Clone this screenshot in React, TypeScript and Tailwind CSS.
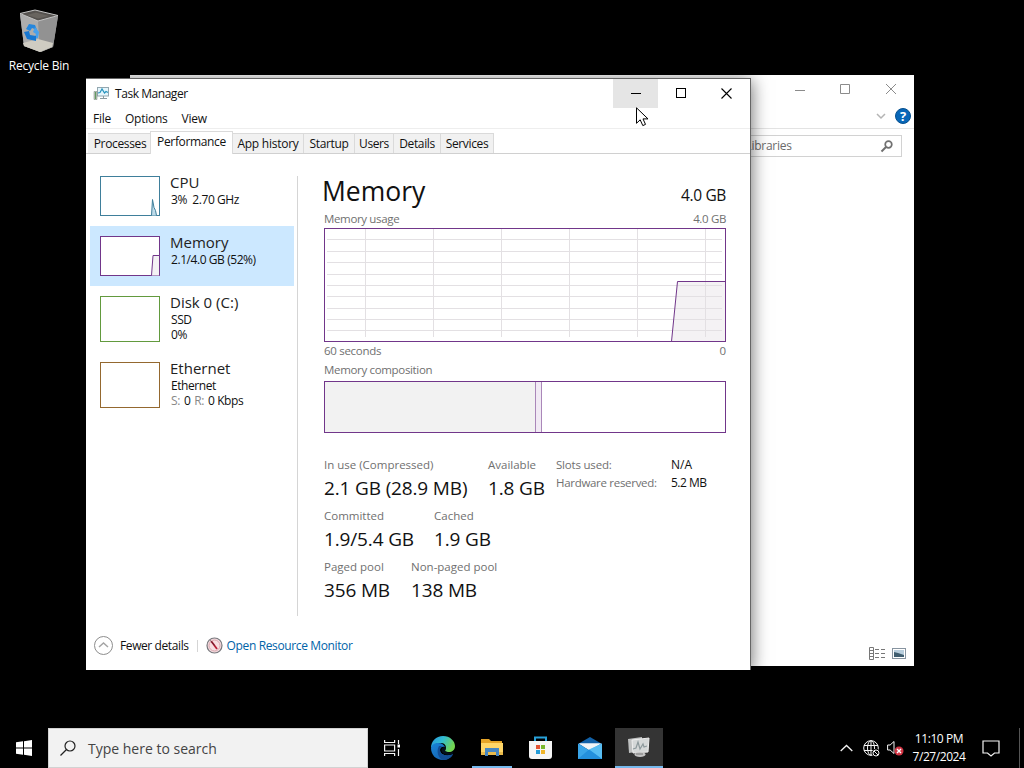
import React from 'react';
import clsx from 'clsx';

const tabs = [
    { label: 'Processes', style: 'w-[64px] pl-px tracking-[-0.35px]' },
    { label: 'Performance', style: 'w-[83px] tracking-[-0.35px]', active: true },
    { label: 'App history', style: 'w-[71px] tracking-[-0.25px]' },
    { label: 'Startup', style: 'w-[51px] tracking-[-0.35px]' },
    { label: 'Users', style: 'w-[39px] tracking-[-0.4px]' },
    { label: 'Details', style: 'w-[47px] tracking-[-0.35px]' },
    { label: 'Services', style: 'w-[53px] tracking-[-0.35px]' },
];

const statRows = [
    [
        { label: 'In use (Compressed)', value: '2.1 GB (28.9 MB)', width: 'w-[164px]' },
        { label: 'Available', value: '1.8 GB', width: 'w-[68px]' },
    ],
    [
        { label: 'Committed', value: '1.9/5.4 GB', width: 'w-[110px]' },
        { label: 'Cached', value: '1.9 GB', width: 'w-[100px]' },
    ],
    [
        { label: 'Paged pool', value: '356 MB', width: 'w-[87px]' },
        { label: 'Non-paged pool', value: '138 MB', width: 'w-[120px]' },
    ],
];

const RecycleBin: React.FC = () => (
    <div className="absolute left-0 top-[8px] w-[78px] flex flex-col items-center">
        <svg width="42" height="46" viewBox="0 0 42 46">
            <path d="M2 6 L20 12 L40 8 L35 39 L23 44 L6 38 Z" fill="#a2a2a2" />
            <path d="M2 6 L20 12 L22 44 L6 38 Z" fill="#adadad" />
            <path d="M20 12 L40 8 L35 39 L22 44 Z" fill="#929292" />
            <path d="M5 35 L20 31 L35 35 L34 39 L22 44 L6 38 Z" fill="#cfccc2" />
            <path d="M2 5.500 L17 2 L40 7.500 L20 13 Z" fill="#55524f" stroke="#c4c4c4" />
            <path d="M9 7 L18 4.500 L31 8 L20 10.500 Z" fill="#68645f" />
            <path d="M8 21 L11 16 L17 17 L19 22 L14 20 L12 23 Z" fill="#2586dc" />
            <path d="M17 19 L21 24 L20 30 L16 31 L18 26 L15 24 Z" fill="#47a1ed" />
            <path d="M6 24 L11 23 L12 27 L18 28 L18 33 L9 31 Z" fill="#1677d2" />
        </svg>
        <span className="mt-[4px] text-[12px] leading-4 text-white tracking-[-0.2px] whitespace-nowrap">Recycle Bin</span>
    </div>
);

const ExplorerWindow: React.FC = () => (
    <div className="absolute left-[130px] top-[75px] w-[784px] h-[591px] bg-white flex flex-col">
        <div className="h-[30px] flex justify-end shrink-0">
            {['M7 15.500h10', 'M6.500 9.500h9v9h-9z', 'M6 9l10 10M16 9L6 19'].map((d, i) => (
                <svg key={i} width="46" height="30" viewBox="-12 0 46 30" fill="none" stroke="#8b8b8b">
                    <path d={d} />
                </svg>
            ))}
        </div>
        <div className="h-[24px] flex items-start justify-end gap-[9px] pr-[3px] border-b border-[#e3e3e3]">
            <svg className="mt-[7px]" width="10" height="10" viewBox="0 0 10 10" fill="none" stroke="#b4b4b4" strokeWidth="1.500">
                <path d="M1 2l4 4 4-4" />
            </svg>
            <div className="mt-[3px] size-4 rounded-full bg-[#0867b8] border border-[#07508f] text-white text-[13px] font-bold flex items-center justify-center leading-none">?</div>
        </div>
        <div className="flex justify-end pt-[6px] pr-[12px]">
            <div className="w-[190px] h-[22px] border border-[#d2d2d2] flex items-center justify-between pl-[5px] pr-[7px]">
                <span className="text-[12px] text-[#6b6b6b] tracking-[-0.25px] whitespace-nowrap ml-[-12px]">Search Libraries</span>
                <svg width="14" height="14" viewBox="0 0 14 14" fill="none" stroke="#707070" strokeWidth="1.700">
                    <circle cx="8.500" cy="5.500" r="3.300" />
                    <path d="M6 8L1.500 12.500" strokeWidth="2" />
                </svg>
            </div>
        </div>
        <div className="mt-auto flex justify-end gap-[6px] pr-[8px] pb-[6px]">
            <svg width="17" height="13" viewBox="0 0 17 13" fill="none" stroke="#777">
                <path d="M.5 .5h4v12h-4zM.5 3.500h4M.5 6.500h4M.5 9.500h4" />
                <path d="M6 2.500h11M6 6.500h11M6 10.500h11" strokeDasharray="4 2" />
            </svg>
            <svg width="14" height="13" viewBox="0 0 14 13">
                <rect x=".5" y="1.500" width="13" height="10" fill="#fff" stroke="#8794a0" />
                <rect x="2" y="3" width="10" height="7" fill="#b8cedd" />
                <path d="M2 5l4 1 6 2v2H2z" fill="#405e70" />
            </svg>
        </div>
    </div>
);

const TitleBar: React.FC = () => (
    <div className="h-[29px] flex shrink-0">
        <div className="flex flex-1 items-center pl-[7px]">
            <svg width="17" height="15" viewBox="0 0 17 15">
                <rect x="4.500" y="1.500" width="11" height="8.500" fill="#e4f5fc" stroke="#93a7b0" />
                <path d="M5 7l2-.5L9 3l2.500 4L13 5.500l2 1" fill="none" stroke="#2793bd" strokeWidth="1.200" />
                <path d="M7 12.500h7M10.500 10v2" stroke="#8a999f" />
                <path d="M1 5.500h3v8H1z" fill="#bac6b9" stroke="#87928c" strokeWidth=".6" />
                <path d="M2.500 6v7" stroke="#639b62" />
            </svg>
            <span className="ml-[5px] mt-px text-[12px] tracking-[-0.45px]">Task Manager</span>
        </div>
        <div className="w-[45px] bg-[#e5e5e5] flex items-center justify-center">
            <div className="w-[10px] h-px bg-black" />
        </div>
        <div className="w-[46px] flex items-center justify-center">
            <div className="size-[10px] border border-black -mt-px" />
        </div>
        <div className="w-[46px] flex items-center justify-center">
            <svg className="-mt-px -ml-px" width="11" height="11" viewBox="0 0 11 11" stroke="#000" strokeWidth="1.100">
                <path d="M.5 .5l10 10M10.500 .5l-10 10" />
            </svg>
        </div>
    </div>
);

const ItemText: React.FC<{ name: string; children: React.ReactNode }> = ({ name, children }) => (
    <div className="ml-[10px] -mt-[3px] whitespace-nowrap">
        <div className="text-[15px] leading-[19px] text-[#222]">{name}</div>
        <div className="text-[12px] leading-[15px] tracking-[-0.43px] ml-px">{children}</div>
    </div>
);

const Sidebar: React.FC = () => (
    <div className="w-[204px] shrink-0 mt-[12px]">
        <div className="h-[60px] flex px-[10px] pt-[10px]">
            <svg width="60" height="40" viewBox="0 0 60 40" fill="#fff" stroke="#3f7f9b">
                <rect x=".5" y=".5" width="59" height="39" />
                <path d="M51.500 39.500l1-16 1.500 8 1.500 3 1 5" fill="#bfdcea" />
            </svg>
            <ItemText name="CPU">3%&nbsp; 2.70 GHz</ItemText>
        </div>
        <div className="h-[60px] flex px-[10px] pt-[10px] bg-[#cce8ff]">
            <svg width="60" height="40" viewBox="0 0 60 40" fill="#fff" stroke="#71368a">
                <rect x=".5" y=".5" width="59" height="39" />
                <path d="M51.500 39.500l1.500-20h6.500v20" fill="#f4f2f4" />
            </svg>
            <ItemText name="Memory">2.1/4.0 GB (52%)</ItemText>
        </div>
        <div className="h-[66px] flex px-[10px] pt-[10px]">
            <div className="w-[60px] h-[46px] border border-[#629a3e]" />
            <ItemText name="Disk 0 (C:)">SSD<br />0%</ItemText>
        </div>
        <div className="h-[66px] flex px-[10px] pt-[10px]">
            <div className="w-[60px] h-[46px] border border-[#94682f]" />
            <ItemText name="Ethernet">
                Ethernet<br />
                <span className="flex gap-[4px]">
                    <span className="text-[#888]">S:</span>
                    <span>0</span>
                    <span className="text-[#888]">R:</span>
                    <span>0 Kbps</span>
                </span>
            </ItemText>
        </div>
    </div>
);

const MemoryChart: React.FC = () => (
    <svg className="block" width="402" height="114" viewBox="0 0 402 114" fill="none">
        <path d="M347.500 113.500l6-60h48v60z" fill="#f4f2f4" />
        {[41.5, 109.5, 177.5, 245.5, 313.5, 381.5].map((x) => (
            <path key={x} d={`M${x} 1V109`} stroke="#e3e0e3" />
        ))}
        {[11.5, 23.5, 34.5, 46.5, 57.5, 68.5, 80.5, 91.5, 102.5].map((y) => (
            <path key={y} d={`M3 ${y}H398`} stroke="#e3e0e3" />
        ))}
        <path d="M347.500 113.500l6-60h48" stroke="#71368a" />
        <rect x=".5" y=".5" width="401" height="113" stroke="#71368a" />
    </svg>
);

const MemoryPanel: React.FC = () => (
    <div className="ml-[26px] w-[402px] text-[#707070] text-[11.5px]">
        <div className="flex justify-between items-end h-[55px] text-[#111] whitespace-nowrap">
            <h1 className="text-[26.5px] leading-[36px] ml-[-2px]">Memory</h1>
            <span className="text-[15.500px] leading-[20px] tracking-[-0.35px] mb-[4px]">4.0 GB</span>
        </div>
        <div className="flex justify-between h-[19px] items-center">
            <span className="tracking-[-0.35px]">Memory usage</span>
            <span className="tracking-[-0.35px]">4.0 GB</span>
        </div>
        <MemoryChart />
        <div className="flex justify-between h-[19px] items-center pb-[2px]">
            <span className="tracking-[-0.3px]">60 seconds</span>
            <span>0</span>
        </div>
        <div className="h-[20px] leading-[18px] tracking-[-0.33px]">Memory composition</div>
        <div className="flex h-[52px] border border-[#71368a]">
            <div className="w-[211px] bg-[#f2f2f2] border-r border-[#aa87b9]" />
            <div className="w-[6px] bg-[#f1eaf4] border-r border-[#aa87b9]" />
        </div>
        <div className="flex mt-[23px]">
            <div className="w-[232px] shrink-0">
                {statRows.map((row) => (
                    <div key={row[0].label} className="flex h-[51px]">
                        {row.map((stat) => (
                            <div key={stat.label} className={clsx('shrink-0 whitespace-nowrap', stat.width)}>
                                <div className="leading-[18px]">{stat.label}</div>
                                <div className="text-[19px] leading-[28px] text-[#111] tracking-[-0.15px]">{stat.value}</div>
                            </div>
                        ))}
                    </div>
                ))}
            </div>
            <div className="grid grid-cols-[115px_60px] auto-rows-[18px] leading-[18px] whitespace-nowrap h-[36px]">
                <span className="tracking-[-0.2px]">Slots used:</span>
                <span className="text-[12px] text-[#111]">N/A</span>
                <span className="tracking-[-0.3px]">Hardware reserved:</span>
                <span className="text-[12px] text-[#111] tracking-[-0.5px]">5.2 MB</span>
            </div>
        </div>
    </div>
);

const TaskManager: React.FC = () => (
    <div className="absolute left-[86px] top-[78px] w-[665px] h-[592px] bg-white border-t border-r border-[#666] shadow-[1px_2px_16px_rgba(0,0,0,0.55)] flex flex-col text-[#111]">
        <TitleBar />
        <div className="flex h-[21px] items-center shrink-0 pl-[7px] pt-[2px] gap-[14px] text-[12px] tracking-[-0.25px] border-b border-[#eee]">
            <span>File</span>
            <span>Options</span>
            <span>View</span>
        </div>
        <div className="h-[25px] shrink-0 flex items-end pl-[2px] border-b border-[#d0d0d0] text-[12px] whitespace-nowrap">
            {tabs.map((tab) => (
                <div
                    key={tab.label}
                    className={clsx(
                        'flex items-center justify-center border-[#dadada] shrink-0',
                        tab.active ? 'h-[23px] bg-white -mb-px -ml-[2px] pb-[2px] border-x border-t' : 'h-[20px] bg-[#f1f1f1] border-r border-t pt-px',
                        tab.style,
                    )}
                >
                    {tab.label}
                </div>
            ))}
        </div>
        <div className="flex h-[463px] pl-[4px]">
            <Sidebar />
            <div className="ml-[3px] mt-[22px] w-px h-[440px] bg-[#d5d5d5]" />
            <MemoryPanel />
        </div>
        <div className="flex flex-1 items-center pl-[8px] pt-[4px] text-[12px]">
            <svg width="19" height="19" viewBox="0 0 19 19" fill="none" stroke="#8d8d8d">
                <circle cx="9.500" cy="9.500" r="9" />
                <path d="M5 11l4.500-4 4.500 4" stroke="#a5a5a5" strokeWidth="1.500" />
            </svg>
            <span className="ml-[7px] tracking-[-0.4px]">Fewer details</span>
            <div className="ml-[8px] w-px h-[12px] bg-[#d5d5d5]" />
            <svg className="ml-[8px] -mt-px" width="17" height="17" viewBox="0 0 17 17" fill="none">
                <circle cx="8.500" cy="8.500" r="7.500" fill="#f6dfe2" stroke="#77777c" strokeWidth="1.200" />
                <circle cx="8.500" cy="8.500" r="5.500" stroke="#d9a5ad" />
                <path d="M5.500 4.500l5.500 7.500" stroke="#b71d35" strokeWidth="1.800" />
                <path d="M4.500 3.500l4 5" stroke="#5d2230" />
            </svg>
            <span className="ml-[4px] text-[#0063a8] tracking-[-0.37px]">Open Resource Monitor</span>
        </div>
    </div>
);

const Taskbar: React.FC = () => (
    <div className="absolute left-0 bottom-0 w-full h-[40px] bg-black flex text-white">
        <div className="w-[48px] flex items-center justify-center">
            <svg width="16" height="16" viewBox="0 0 16 16" fill="#fff">
                <path d="M0 2.300L7 1.300V7.500H0zM8 1.200L16 0V7.500H8zM0 8.500H7V14.700L0 13.700zM8 8.500H16V16L8 14.800z" />
            </svg>
        </div>
        <div className="w-[320px] bg-[#f2f2f2] border border-[#d2d2d2] flex items-center pl-[11px] text-[#444]">
            <svg width="16" height="16" viewBox="0 0 16 16" fill="none" stroke="#222" strokeWidth="1.200">
                <circle cx="10" cy="6" r="5" />
                <path d="M6.500 9.500L.5 15.500" />
            </svg>
            <span className="ml-[12px] text-[14px]">Type here to search</span>
        </div>
        <div className="w-[48px] flex items-center justify-center">
            <svg width="16" height="16" viewBox="0 0 16 16" fill="none" stroke="#f5f5f5" strokeWidth="1.200">
                <path d="M.6 0v2.500h10V0M.6 16v-2.500h10V16M.6 5h10v6H.6zM14.500 0v4M14.500 9v7" />
                <rect x="13.500" y="4.500" width="2.500" height="3" fill="#fff" stroke="none" />
            </svg>
        </div>
        <div className="w-[54px] flex items-center justify-center">
            <svg width="24" height="24" viewBox="0 0 24 24">
                <defs>
                    <linearGradient id="edgeTop" x1="0" y1="0" x2="1" y2=".4">
                        <stop offset="0" stopColor="#2793dc" />
                        <stop offset=".5" stopColor="#31bdd2" />
                        <stop offset="1" stopColor="#73d551" />
                    </linearGradient>
                    <linearGradient id="edgeBottom" x1="0" y1="0" x2="1" y2="1">
                        <stop offset="0" stopColor="#1985d8" />
                        <stop offset="1" stopColor="#1558a5" />
                    </linearGradient>
                </defs>
                <path d="M0 12C0 5 5 0 12 0c7 0 12 5 12 10 0 4-3 6-6 6-3 0-5-1-4-2 2-2 1-7-4-7-5 0-8 2-10 5z" fill="url(#edgeTop)" />
                <path d="M0 12c1-4 4-5 7-5 4 0 6 2 7 4-3-1-5 1-5 3 0 5 7 7 13 4-2 4-6 6-10 6C5 24 0 19 0 12z" fill="url(#edgeBottom)" />
                <path d="M8 10c-3 5-1 12 4 14 4 0 8-2 10-6-6 3-13 1-13-4 0-2 1-3 2-4z" fill="#124d94" />
                <path d="M14.500 11c1.500 3-2 3.500 1 5 2 1 5 1 7-.5l-1 2.500c-5 2-11 0-11-4 0-2 2-3.500 4-3z" fill="#04101c" />
            </svg>
        </div>
        <div className="ml-[2px] w-[40px] flex items-center justify-center border-b-2 border-[#76b9ed]">
            <svg className="mt-px" width="22" height="19" viewBox="0 0 22 19">
                <path d="M0 1h8l2 2h11v14H0z" fill="#e6a528" />
                <path d="M0 5h22v12H0z" fill="#ffd668" />
                <path d="M0 14h22v3H0z" fill="#e9ba4b" />
                <path d="M4 10h14v8h-3v-4H7v4H4z" fill="#4686c1" />
            </svg>
        </div>
        <div className="ml-[4px] w-[48px] flex items-center justify-center">
            <svg width="24" height="24" viewBox="0 0 24 24">
                <path d="M7 6V1.500h11V6" fill="none" stroke="#28a1d9" strokeWidth="2" />
                <path d="M1 5h23v15q0 3-3 3H4q-3 0-3-3z" fill="#f5f5f5" />
                <path d="M8 9h4v4H8z" fill="#e35332" />
                <path d="M13 9h4v4h-4z" fill="#78b72d" />
                <path d="M8 14h4v4H8z" fill="#249bd7" />
                <path d="M13 14h4v4h-4z" fill="#f0b529" />
            </svg>
        </div>
        <div className="w-[52px] flex items-center justify-center">
            <svg width="24" height="24" viewBox="0 0 24 24">
                <path d="M0 8L12 1l12 7v4H0z" fill="#1261a8" />
                <path d="M1 7.500h22L12 15z" fill="#f2f5f7" />
                <path d="M0 7.500l11 6.500L24 7.500V23H0z" fill="#3aa5e8" />
                <path d="M1 7.500h22L11 13.500z" fill="#f2f5f7" />
                <path d="M24 7.500V23L11 13.500z" fill="#58bdf2" />
                <path d="M0 23l11-9.500L24 23z" fill="#2490dc" />
            </svg>
        </div>
        <div className="-ml-px w-[48px] bg-[#343434] flex items-center justify-center border-b-2 border-[#76b9ed]">
            <svg width="24" height="22" viewBox="0 0 24 22">
                <path d="M1 3l14-2v14L2 17z" fill="#bfc1c1" />
                <path d="M5 4l17-2-1 14-15 1z" fill="#d5d8d8" stroke="#eee" />
                <path d="M6 13l3-1 2-6 2 7 3-5 1 3 3-1" fill="none" stroke="#8d999c" strokeWidth="1.200" />
                <ellipse cx="13" cy="18.500" rx="5.500" ry="2.500" fill="#c4c4c4" />
                <path d="M9 18h7" stroke="#777" />
            </svg>
        </div>
        <div className="ml-auto flex items-center pr-[4px]">
            <svg width="13" height="8" viewBox="0 0 13 8" fill="none" stroke="#f5f5f5" strokeWidth="1.300">
                <path d="M.7 7l5.800-5.500L12.300 7" />
            </svg>
            <svg className="ml-[10px]" width="17" height="17" viewBox="0 0 17 17" fill="none" stroke="#f5f5f5">
                <circle cx="8" cy="8" r="7.300" />
                <ellipse cx="8" cy="8" rx="3.500" ry="7.300" />
                <path d="M1 5.500h14M1 10.500h14M8 1v14" />
                <circle cx="13" cy="13" r="4.200" fill="#000" stroke="none" />
                <circle cx="13" cy="13" r="3" />
                <path d="M11 11l4 4" />
            </svg>
            <svg className="ml-[7px]" width="17" height="16" viewBox="0 0 17 16" fill="none">
                <path d="M.6 5h2.500L7 1.500v12L3.100 10H.6z" stroke="#f5f5f5" />
                <circle cx="12" cy="11" r="4.500" fill="#d13443" />
                <path d="M10 9l4 4M14 9l-4 4" stroke="#fff" strokeWidth="1.400" />
            </svg>
            <div className="ml-[7px] w-[56px] text-center text-[12px] leading-[18px] tracking-[-0.43px] whitespace-nowrap">
                11:10 PM<br />7/27/2024
            </div>
            <svg className="ml-[15px]" width="18" height="17" viewBox="0 0 18 17" fill="none" stroke="#f5f5f5" strokeWidth="1.200">
                <path d="M1 1h16v12h-4.500l-3.500 3-3.500-3H1z" />
            </svg>
            <div className="ml-[19px] w-px h-[40px] bg-[#555]" />
        </div>
    </div>
);

const App: React.FC = () => {
    return (
        <div className="relative w-[1024px] h-[768px] overflow-hidden bg-black font-['Open_Sans','Noto_Sans',sans-serif]">
            <RecycleBin />
            <ExplorerWindow />
            <TaskManager />
            <Taskbar />

            {/* Mouse pointer */}
            <svg className="absolute left-[636px] top-[107px]" width="13" height="20" viewBox="0 0 13 20">
                <path d="M.5 .8v15.500l3.700-3.500 2.600 5.800 2.700-1.200L7 11.900h5z" fill="#fff" stroke="#000" />
            </svg>
        </div>
    );
};

export default App;
